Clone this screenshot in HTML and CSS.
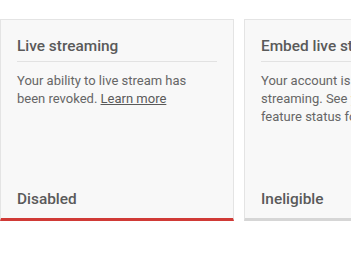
FILE: index.html
```html
<!DOCTYPE html>
<html>
<head>
<meta charset="utf-8">
<link rel="stylesheet" href="styles.css">
</head>
<body>
<div class="row">
  <section class="card card-disabled">
    <h2 class="card-title">Live streaming</h2>
    <p class="card-text">Your ability to live stream has been revoked. <a class="link" href="#">Learn more</a></p>
    <div class="card-status">Disabled</div>
  </section>
  <section class="card card-ineligible">
    <h2 class="card-title">Embed live streams</h2>
    <p class="card-text">Your account is ineligible for live streaming. See your channel's feature status for more details.</p>
    <div class="card-status">Ineligible</div>
  </section>
</div>
</body>
</html>
```

FILE: styles.css
```css
html, body {
  margin: 0;
  padding: 0;
  background: #ffffff;
  overflow: hidden;
}
body {
  font-family: Roboto, "Liberation Sans", Arial, sans-serif;
  color: #606060;
}
.row {
  display: flex;
  gap: 10px;
  padding-top: 19px;
  width: 700px;
}
.card {
  box-sizing: border-box;
  flex: 0 0 234px;
  height: 202px;
  display: flex;
  flex-direction: column;
  background: #f8f8f8;
  border: 1px solid #e4e4e4;
  padding: 16px 16px 9px 16px;
}
.card-disabled {
  border-bottom: 3px solid #d03a36;
}
.card-ineligible {
  border-bottom: 3px solid #d6d6d6;
}
.card-title {
  margin: 0;
  font-size: 15.4px;
  line-height: 20px;
  font-weight: 500;
  color: #5a5a5a;
  padding-bottom: 5px;
  border-bottom: 1px solid #e2e2e2;
  white-space: nowrap;
}
.card-text {
  margin: 10px 0 0 0;
  font-size: 13px;
  line-height: 18px;
  color: #666666;
}
.link {
  color: #5a5a5a;
  text-decoration: underline;
}
.card-status {
  margin-top: auto;
  font-size: 15.4px;
  line-height: 20px;
  font-weight: 500;
  color: #5a5a5a;
}
```
